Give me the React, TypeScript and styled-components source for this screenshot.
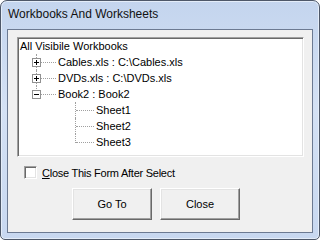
import React from 'react';
import styled, { createGlobalStyle } from 'styled-components';

const GlobalStyle = createGlobalStyle`
  html, body {
    margin: 0;
    padding: 0;
    background: #ffffff;
  }
  body {
    width: 320px;
    height: 240px;
    overflow: hidden;
  }
`;

const Window = styled.div`
  box-sizing: border-box;
  width: 320px;
  height: 240px;
  display: flex;
  flex-direction: column;
  padding: 0 6px 6px 6px;
  border: 1px solid #4e5869;
  border-radius: 7px 7px 5px 5px;
  background: linear-gradient(to bottom, #c4d5ee 0%, #d4e1f4 45%, #c8d8f0 100%);
  box-shadow: inset 0 0 0 1px #e4edf9;
`;

const TitleBar = styled.div`
  box-sizing: border-box;
  height: 28px;
  display: flex;
  align-items: center;
  padding: 0 0 3px 1px;
  font-family: 'Liberation Sans', Arial, sans-serif;
  font-size: 12px;
  color: #111111;
`;

const Client = styled.div`
  flex: 1;
  display: flex;
  flex-direction: column;
  padding: 7px 8px 12px 9px;
  border: 1px solid #6c7a92;
  background: #f0f0f0;
  font-family: 'Liberation Sans', Arial, sans-serif;
  font-size: 11px;
  color: #000000;
`;

const TreeBox = styled.div`
  box-sizing: border-box;
  height: 120px;
  padding: 0;
  border: 1px solid;
  border-color: #a0a0a0 #ffffff #ffffff #a0a0a0;
  box-shadow: inset 1px 1px 0 #696969, inset -1px -1px 0 #e3e3e3;
  background: #ffffff;
`;

const TreeRow = styled.div`
  display: flex;
  align-items: center;
  height: 16px;
`;

const Indent = styled.span<{ $width: number }>`
  flex: none;
  width: ${p => p.$width}px;
  height: 16px;
`;

const Connector = styled.span<{ $last?: boolean; $width: number }>`
  position: relative;
  flex: none;
  width: ${p => p.$width}px;
  height: 16px;
  &::before {
    content: '';
    position: absolute;
    left: 18px;
    top: 0;
    height: ${p => (p.$last ? '9px' : '16px')};
    border-left: 1px dotted #a0a0a0;
  }
  &::after {
    content: '';
    position: absolute;
    left: 19px;
    right: 0;
    top: 8px;
    border-top: 1px dotted #a0a0a0;
  }
`;

const Expander = styled.span<{ $open?: boolean }>`
  position: absolute;
  z-index: 1;
  left: 14px;
  top: 4px;
  box-sizing: border-box;
  width: 9px;
  height: 9px;
  border: 1px solid #919191;
  background: #ffffff;
  &::before {
    content: '';
    position: absolute;
    left: 1px;
    top: 3px;
    width: 5px;
    height: 1px;
    background: #000000;
  }
  &::after {
    content: '';
    position: absolute;
    left: 3px;
    top: 1px;
    width: 1px;
    height: 5px;
    background: #000000;
    display: ${p => (p.$open ? 'none' : 'block')};
  }
`;

const NodeLabel = styled.span`
  padding-left: 2px;
  white-space: nowrap;
  line-height: 16px;
`;

const CheckRow = styled.label`
  display: flex;
  align-items: center;
  gap: 5px;
  margin: 9px 0 0 7px;
  height: 13px;
  letter-spacing: -0.25px;
`;

const CheckBox = styled.span`
  box-sizing: border-box;
  flex: none;
  width: 13px;
  height: 13px;
  border: 1px solid;
  border-color: #a0a0a0 #ffffff #ffffff #a0a0a0;
  box-shadow: inset 1px 1px 0 #696969, inset -1px -1px 0 #e3e3e3;
  background: #ffffff;
`;

const Mnemonic = styled.span`
  text-decoration: underline;
`;

const ButtonRow = styled.div`
  display: flex;
  gap: 8px;
  margin: 9px 0 0 55px;
`;

const Button = styled.button`
  box-sizing: border-box;
  width: 80px;
  height: 32px;
  padding: 0;
  border: 1px solid;
  border-color: #ffffff #696969 #696969 #ffffff;
  box-shadow: inset -1px -1px 0 #a0a0a0, inset 1px 1px 0 #e3e3e3;
  background: #f0f0f0;
  font-family: 'Liberation Sans', Arial, sans-serif;
  font-size: 11px;
  color: #000000;
`;

type Node = { label: string; children?: string[]; open?: boolean };

const workbooks: Node[] = [
  { label: 'Cables.xls : C:\\Cables.xls', children: [] },
  { label: 'DVDs.xls : C:\\DVDs.xls', children: [] },
  { label: 'Book2 : Book2', open: true, children: ['Sheet1', 'Sheet2', 'Sheet3'] },
];

const App = () => {
  return (
    <>
      <GlobalStyle />
      <Window>
        <TitleBar>Workbooks And Worksheets</TitleBar>
        <Client>
          <TreeBox>
            <TreeRow>
              <NodeLabel>All Visibile Workbooks</NodeLabel>
            </TreeRow>
            {workbooks.map((wb, i) => {
              const lastBook = i === workbooks.length - 1;
              return (
                <React.Fragment key={wb.label}>
                  <TreeRow>
                    <Connector $width={38} $last={lastBook}>
                      <Expander $open={wb.open} />
                    </Connector>
                    <NodeLabel>{wb.label}</NodeLabel>
                  </TreeRow>
                  {wb.open &&
                    wb.children?.map((sheet, j) => (
                      <TreeRow key={sheet}>
                        <Indent $width={39} />
                        <Connector $width={37} $last={j === (wb.children?.length ?? 0) - 1} />
                        <NodeLabel>{sheet}</NodeLabel>
                      </TreeRow>
                    ))}
                </React.Fragment>
              );
            })}
          </TreeBox>
          <CheckRow>
            <CheckBox />
            <span>
              <Mnemonic>C</Mnemonic>lose This Form After Select
            </span>
          </CheckRow>
          <ButtonRow>
            <Button>Go To</Button>
            <Button>Close</Button>
          </ButtonRow>
        </Client>
      </Window>
    </>
  );
};

export default App;
